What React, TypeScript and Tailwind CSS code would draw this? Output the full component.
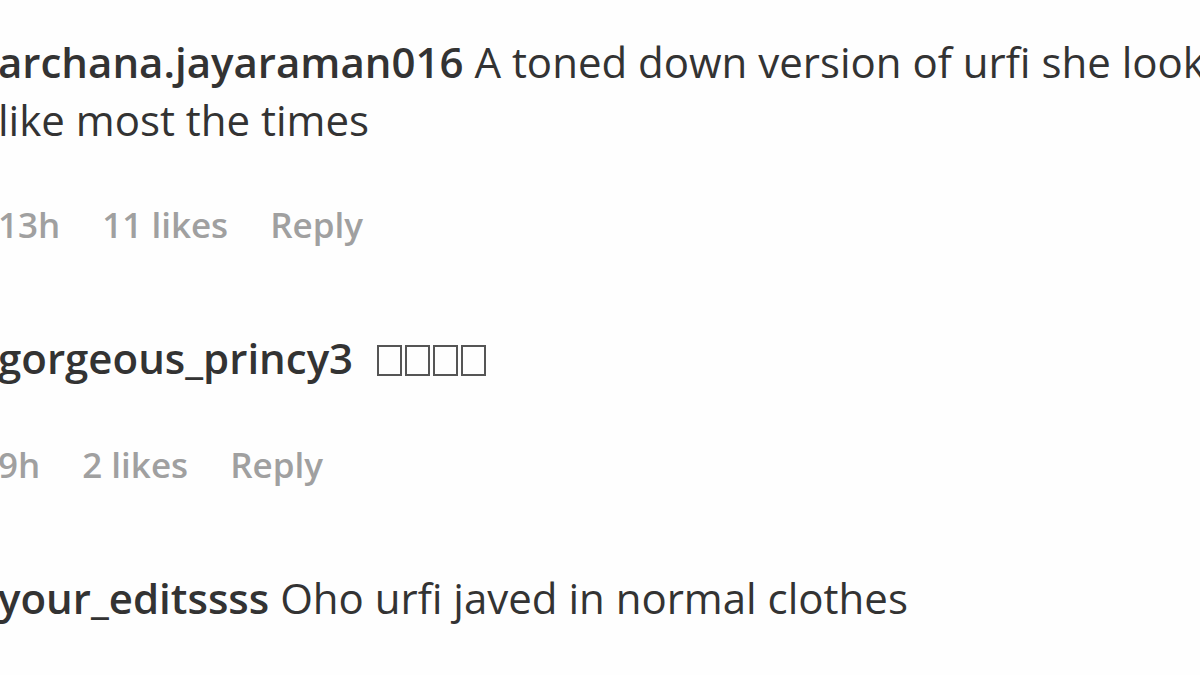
import React from 'react';

const font = { fontFamily: '"Open Sans", "Noto Sans", "Liberation Sans", sans-serif' };

function Meta({ time, likes }: { time: string; likes: string }) {
  return (
    <div className="flex items-center gap-[42px] text-[35px] font-semibold text-[#a0a0a0] leading-none">
      <span>{time}</span>
      <span>{likes}</span>
      <span>Reply</span>
    </div>
  );
}

function Tofu() {
  return (
    <span className="inline-flex gap-[3px] align-middle -mt-[4px] ml-[24px]">
      {[0, 1, 2, 3].map((i) => (
        <span key={i} className="inline-block w-[25px] h-[31px] border-2 border-[#555]" />
      ))}
    </span>
  );
}

export default function App() {
  return (
    <div className="w-[1200px] h-[675px] overflow-hidden bg-[#fefefe] text-[#333]" style={font}>
      <div className="-ml-[2px] pt-[33px]">
        <div className="text-[42px] leading-[58px] whitespace-nowrap">
          <span className="font-semibold">archana.jayaraman016</span> A toned down version of urfi she looks
        </div>
        <div className="text-[42px] leading-[58px] whitespace-nowrap">like most the times</div>

        <div className="mt-[58px]">
          <Meta time="13h" likes="11 likes" />
        </div>

        <div className="mt-[87px] text-[42px] leading-[58px] whitespace-nowrap">
          <span className="font-semibold">gorgeous_princy3</span>
          <Tofu />
        </div>

        <div className="mt-[60px]">
          <Meta time="9h" likes="2 likes" />
        </div>

        <div className="mt-[87px] text-[42px] leading-[58px] whitespace-nowrap">
          <span className="font-semibold">your_editssss</span> Oho urfi javed in normal clothes
        </div>
      </div>
    </div>
  );
}
